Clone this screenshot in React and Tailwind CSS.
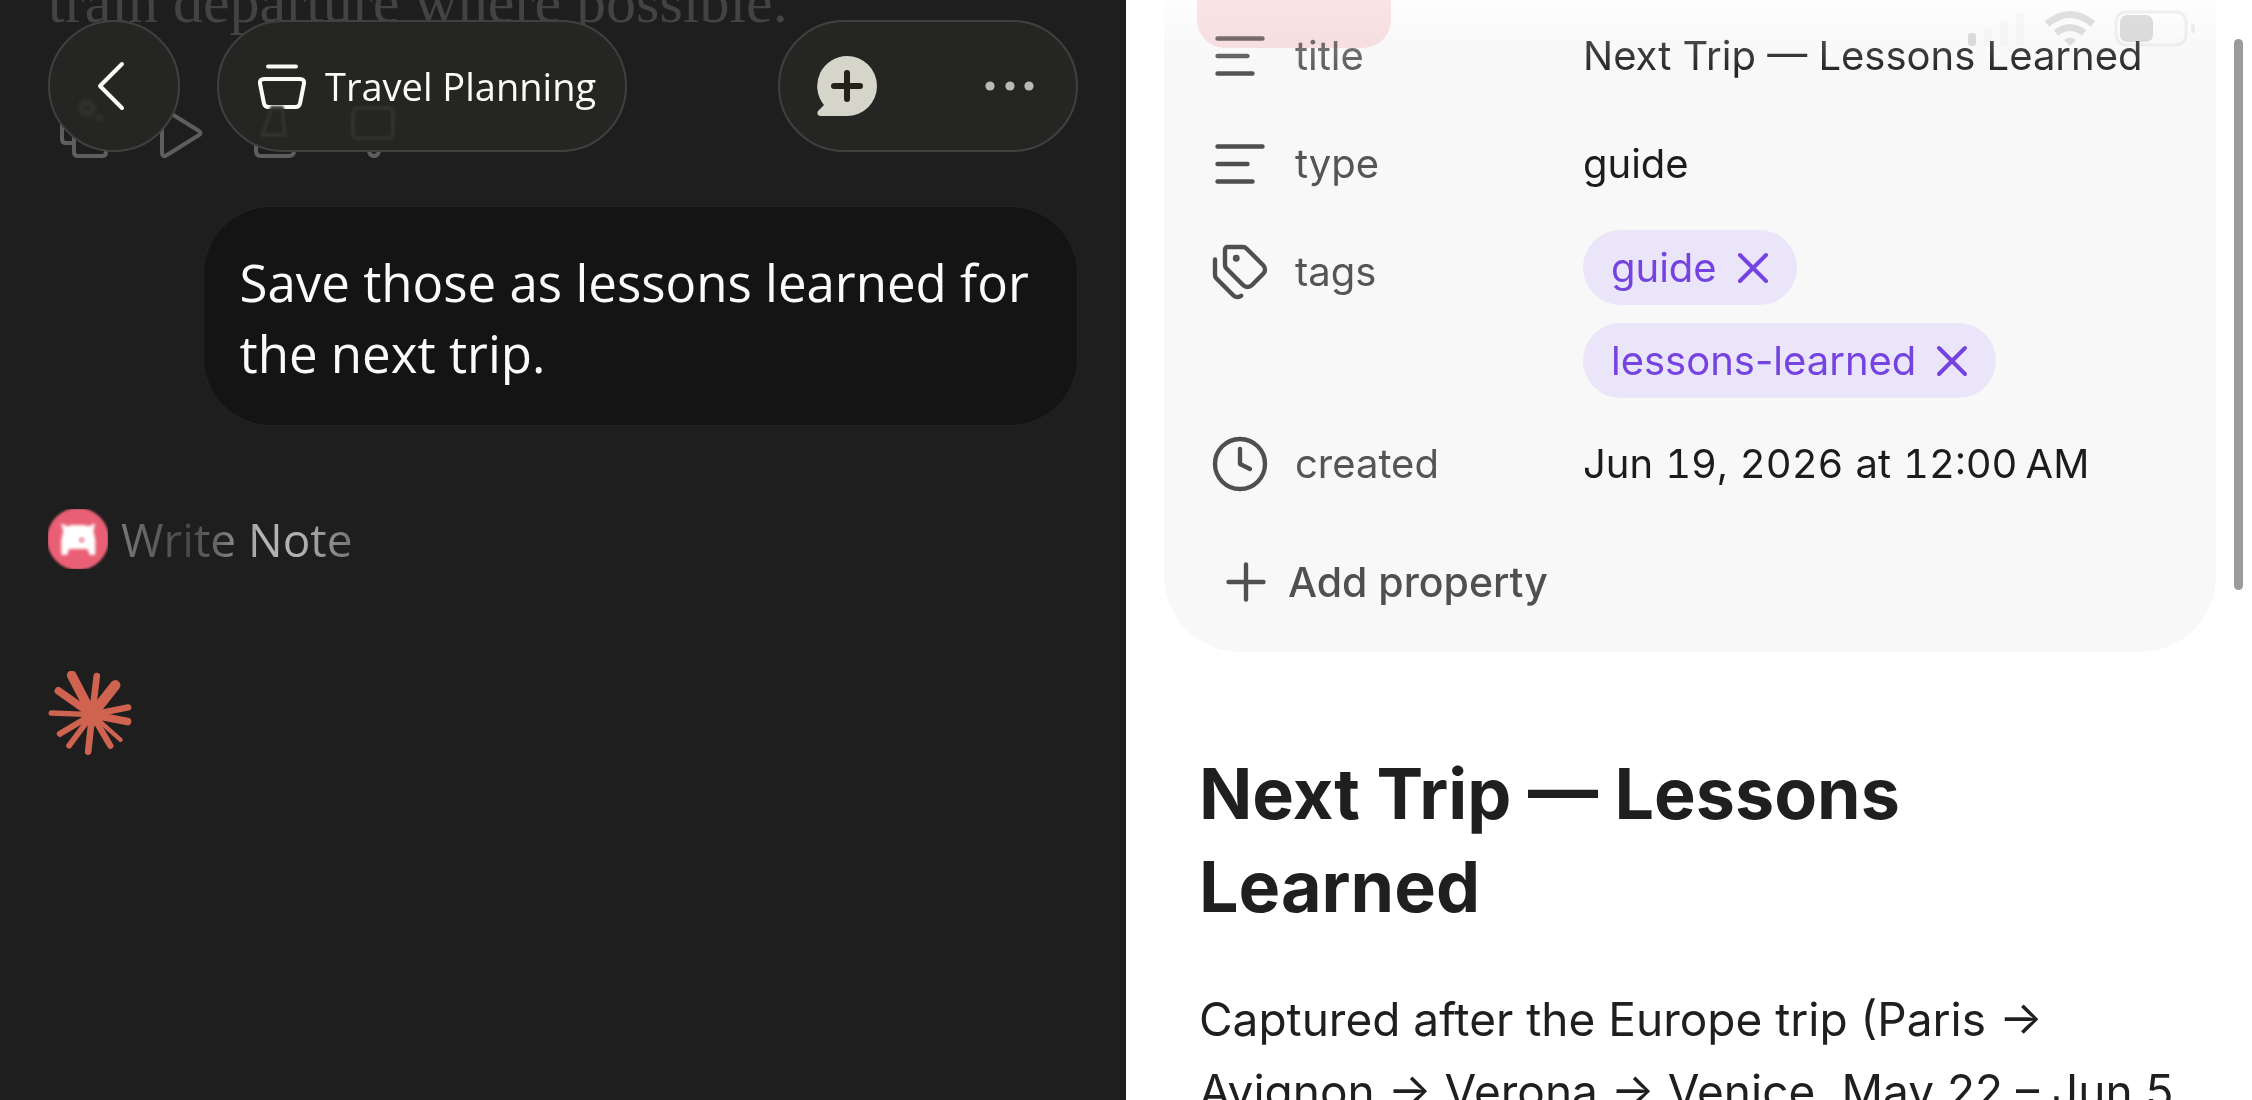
import React from "react";
import { AlignLeft, Tags, Clock, Plus } from "lucide-react";

const RAYS = [
  [215, 584, 29], [291, 586, 20], [347, 614, 31], [386, 681, 19], [384, 724, 23], [363, 779, 13],
  [332, 797, 19], [265, 815, 20], [207, 797, 17], [179, 761, 18], [153, 698, 16], [175, 631, 23],
];

function Starburst() {
  return (
    <svg viewBox="144 571 253 254" className="mt-[102px] size-[84px]" stroke="#d0634f" strokeLinecap="round" role="img" aria-label="Thinking">
      {RAYS.map(([x, y, w]) => (
        <line key={x + "-" + y} x1="277" y1="703" x2={x} y2={y} strokeWidth={w} />
      ))}
      <circle cx="278" cy="704" r="34" fill="#d0634f" stroke="none" />
    </svg>
  );
}

function ToolBadge() {
  return (
    <svg viewBox="0 0 180 180" className="size-[60px]" aria-hidden="true">
      <defs>
        <filter id="soft-rim"><feGaussianBlur stdDeviation="3" /></filter>
        <filter id="soft-mark"><feGaussianBlur stdDeviation="5" /></filter>
      </defs>
      <circle cx="90" cy="90" r="93" fill="#e95f75" filter="url(#soft-rim)" />
      <path
        filter="url(#soft-mark)"
        fill="#fff"
        stroke="#fff"
        strokeWidth="4"
        strokeLinejoin="round"
        d="M42 46l16 8 14-4h36l14 4 17-8-5 20 6 26v44h-14l-6-18H62l-6 18H42V92l6-26z"
      />
      <circle cx="101" cy="93" r="9" fill="#f2a5b1" filter="url(#soft-rim)" />
    </svg>
  );
}

function ReplyActions() {
  return (
    <div className="flex pt-[76px] text-[#5e5e5c]" aria-hidden="true">
      <svg viewBox="48 108 370 50" className="h-[50px] w-[370px]" fill="none" stroke="currentColor" strokeWidth="4" strokeLinejoin="round" strokeLinecap="round">
        <path d="M72 143h-6q-4 0-4-4v-27q0-4 4-4h22M78 122h24q4 0 4 4v26q0 4-4 4H78q-4 0-4-4v-26q0-4 4-4z" />
        <path d="M162 113v39q0 6 5 3l32-20q3-2 0-4l-32-20q-5-3-5 2z" />
        <path d="M256 130v21q0 5 5 5h28q5 0 5-5v-21M262 130l8-20h10l-2 20" />
        <path d="M354 114q0-4 4-4h32q4 0 4 4v25q0 4-4 4h-8M354 114v25q0 4 4 4h8l4 11q4 4 8 0l4-11" />
      </svg>
    </div>
  );
}

const glass = "border-2 border-[#40403e] bg-[#252523]";

function ChatHeader() {
  return (
    <header className="absolute inset-x-12 top-5 flex h-[132px] items-stretch">
      <button aria-label="Back" className={"relative flex w-[132px] items-center justify-center rounded-full " + glass}>
        <svg viewBox="0 0 32 52" className="mr-2 h-[52px] w-8" fill="none" stroke="#fafaf8" strokeWidth="4" strokeLinecap="round" strokeLinejoin="round">
          <path d="M28 4L6 26l22 22" />
        </svg>
        <svg viewBox="0 0 32 30" className="absolute bottom-6 left-6 h-[30px] w-8 blur-[2px]" fill="none" stroke="#343432" strokeWidth="5" aria-hidden="true">
          <circle cx="13" cy="12" r="6" />
          <path d="M22 22h7" />
        </svg>
      </button>
      <button className={"relative ml-[37px] flex items-center gap-[19px] rounded-full pl-[39px] pr-[29px] " + glass}>
        <svg viewBox="0 0 48 48" className="size-12" fill="none" stroke="#fafaf8" strokeWidth="4" strokeLinecap="round" strokeLinejoin="round">
          <path d="M10 4.500h28" />
          <path d="M6 17h36q4.500 0 4 4.500l-4 20q-.8 3.500-4.500 3.500h-27q-3.700 0-4.500-3.500l-4-20q-.5-4.500 4-4.500z" />
        </svg>
        <span className="font-['Open_Sans',sans-serif] text-[38px] leading-[52px] text-[#fafaf8]">Travel Planning</span>
        <svg viewBox="0 0 140 36" className="absolute bottom-2 left-[39px] h-9 w-[140px] blur-[1px]" fill="none" stroke="#31312f" strokeWidth="4" strokeLinejoin="round" aria-hidden="true">
          <path d="M14 2h10l3 27H4z" />
          <rect x="95" y="2" width="40" height="30" rx="5" />
        </svg>
      </button>
      <div className={"ml-auto flex w-[300px] items-center justify-between rounded-full pl-[37px] pr-[41px] " + glass}>
        <button aria-label="New chat">
          <svg viewBox="0 0 60 60" className="size-[60px]">
            <path d="M30 0a30 30 0 0 1 0 60H3q-4-1-2-5l6-6A30 30 0 0 1 30 0z" fill="#d5d5c9" />
            <path d="M30 17v26M17 30h26" stroke="#22221a" strokeWidth="6" strokeLinecap="round" />
          </svg>
        </button>
        <button aria-label="More options">
          <svg viewBox="0 0 50 12" className="h-3 w-[50px]" fill="#b9b9b5">
            <circle cx="5" cy="6" r="4.600" />
            <circle cx="25" cy="6" r="4.600" />
            <circle cx="44" cy="6" r="4.600" />
          </svg>
        </button>
      </div>
    </header>
  );
}

function ChatPane() {
  return (
    <section className="relative overflow-hidden bg-[#1e1e1e]">
      <div className="flex flex-col px-12">
        <p className="-mt-7 whitespace-nowrap font-['Liberation_Serif',serif] text-[60px] leading-[60px] text-[#434341]">
          train departure where possible.
        </p>
        <ReplyActions />
        <p className="mt-12 max-w-[85%] self-end rounded-[68px] border border-[#232323] bg-[#141414] px-9 pb-9 pt-10 font-['Open_Sans',sans-serif] text-[51px] leading-[71px] text-[#fafaf8]">
          Save those as lessons learned for the next trip.
        </p>
        <div className="mt-[83px] flex items-center gap-[13px]">
          <ToolBadge />
          <span className="bg-[linear-gradient(90deg,#777775_0%,#464644_28%,#6a6a68_42%,#b4b4b2_60%,#b0b0ae_78%,#727270_100%)] bg-clip-text font-['Open_Sans',sans-serif] text-[46px] leading-[60px] text-transparent">
            Write Note
          </span>
        </div>
        <Starburst />
      </div>
      <ChatHeader />
    </section>
  );
}

function Property({ icon: Icon, name, children }) {
  return (
    <div className="flex items-start">
      <dt className="flex h-[108px] w-[373px] shrink-0 items-center gap-[25px] text-[#555555]">
        <Icon size={60} strokeWidth={1.75} color="#4f4f4f" aria-hidden="true" />
        {name}
      </dt>
      <dd className="flex min-h-[108px] items-center text-[#1c1c1c]">{children}</dd>
    </div>
  );
}

function Tag({ children }) {
  return (
    <li className="flex h-[75px] items-center gap-5 rounded-full bg-[#ebe5f9] px-7 text-[#7443e0]">
      {children}
      <button aria-label={"Remove " + children}>
        <svg viewBox="0 0 32 32" className="size-8" stroke="currentColor" strokeWidth="4" strokeLinecap="round">
          <path d="M3 3l26 26M29 3L3 29" />
        </svg>
      </button>
    </li>
  );
}

function StatusBar() {
  return (
    <div className="pointer-events-none absolute inset-x-0 top-0 h-20" aria-hidden="true">
      <div className="absolute inset-0 bg-linear-to-b from-white/80 via-white/20 via-50% to-white/0" />
      <div className="absolute left-[71px] top-0 h-12 w-[194px] rounded-b-[28px] bg-[#fbe5e7] mix-blend-multiply" />
      <svg viewBox="0 0 240 50" className="absolute right-[50px] top-0 h-[50px] w-60 mix-blend-multiply" fill="#e0e0e0">
        <rect x="6" y="33" width="8" height="13" rx="3" />
        <rect x="22" y="27" width="8" height="19" rx="3" fill="#fafafa" />
        <rect x="38" y="20" width="8" height="26" rx="3" fill="#fafafa" />
        <rect x="54" y="13" width="8" height="33" rx="3" fill="#fafafa" />
        <g fill="none" stroke="#e2e2e2" strokeWidth="7">
          <path d="M85 24q23-19 46 0" />
          <path d="M94 33q14-11 28 0" />
        </g>
        <path d="M102 40q6-5 12 0l-6 6z" fill="#e2e2e2" />
        <rect x="154" y="12" width="70" height="33" rx="10" fill="none" stroke="#f3f3f3" strokeWidth="3" />
        <rect x="158" y="15" width="33" height="27" rx="7" />
        <rect x="229" y="24" width="4" height="9" rx="2" fill="#f0f0f0" />
      </svg>
    </div>
  );
}

function NotePane() {
  return (
    <section className="relative overflow-hidden bg-white pl-[38px] pr-9 font-['Inter',sans-serif]">
      <div className="rounded-b-[76px] bg-[#f8f8f8] pb-10 pl-[46px] pr-12 pt-0.5 text-[40px] leading-[52px]">
        <dl>
          <Property icon={AlignLeft} name="title">Next Trip — Lessons Learned</Property>
          <Property icon={AlignLeft} name="type">guide</Property>
          <Property icon={Tags} name="tags">
            <ul className="flex flex-col items-start gap-[18px] py-3">
              <Tag>guide</Tag>
              <Tag>lessons-learned</Tag>
            </ul>
          </Property>
          <Property icon={Clock} name="created">
            <time dateTime="2026-06-19T00:00" className="flex gap-3 tabular-nums">
              <span>Jun</span>
              <span>19,</span>
              <span>2026</span>
              <span>at</span>
              <span className="flex gap-2"><span>12:00</span><span>AM</span></span>
            </time>
          </Property>
        </dl>
        <button className="mt-[34px] flex items-center gap-3 pl-1.5 text-[41px] font-medium leading-[60px] text-[#505050]">
          <Plus size={60} strokeWidth={1.75} aria-hidden="true" />
          Add property
        </button>
      </div>
      <article className="pl-[35px] pr-2 text-[#1f1f1f]">
        <h1 className="mt-[95px] pr-12 text-[70px] font-bold leading-[93px]">Next Trip — Lessons Learned</h1>
        <p className="mt-[50px] text-[46px] leading-[72px]">
          Captured after the Europe trip (Paris → Avignon → Verona → Venice, May 22 – Jun 5,
        </p>
      </article>
      <StatusBar />
      <div className="absolute right-[9px] top-[39px] h-[551px] w-[9px] rounded-full bg-[#9b9b9b]" aria-hidden="true" />
    </section>
  );
}

export default function App() {
  return (
    <main className="grid h-screen grid-cols-2 overflow-hidden">
      <ChatPane />
      <NotePane />
    </main>
  );
}
